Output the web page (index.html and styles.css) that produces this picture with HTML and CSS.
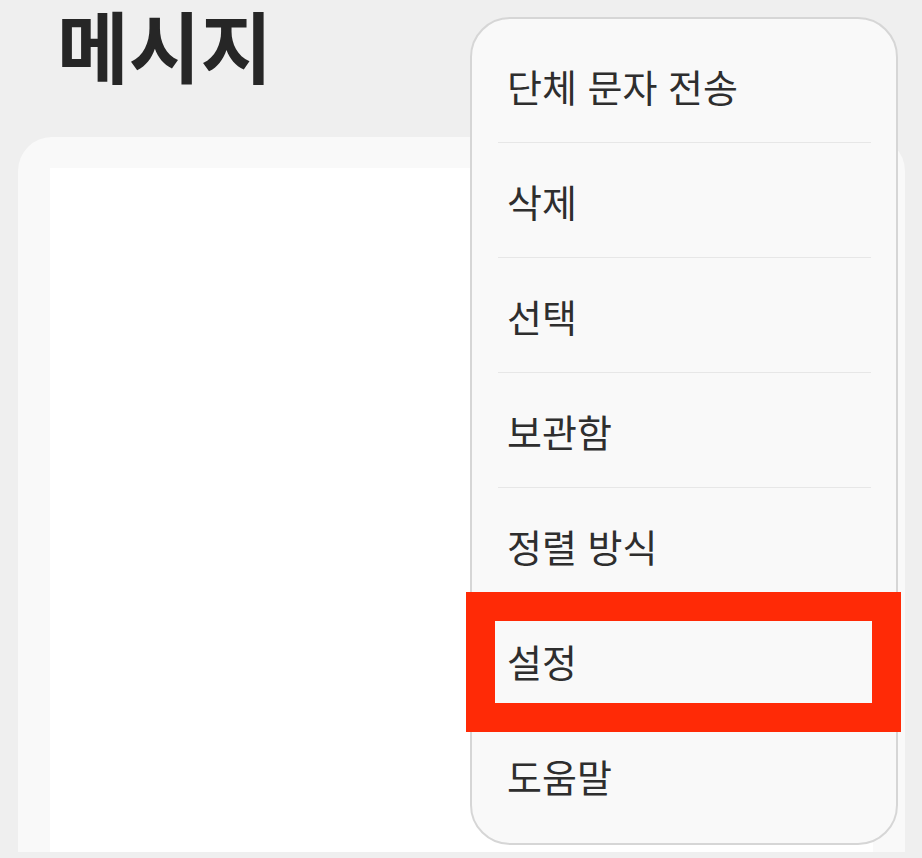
FILE: index.html
```html
<!DOCTYPE html>
<html lang="ko">
  <head>
    <meta charset="UTF-8" />
    <meta name="viewport" content="width=device-width, initial-scale=1.0" />
    <title>메시지</title>
    <link rel="stylesheet" href="styles.css">
  </head>
  <body>
    <div class="screen">
      <div class="header">
        <h1 class="title">메시지</h1>
      </div>
      <div class="card">
        <div class="list"></div>
      </div>

      <div class="menu">
        <div class="menu-item">단체 문자 전송</div>
        <div class="menu-item">삭제</div>
        <div class="menu-item">선택</div>
        <div class="menu-item">보관함</div>
        <div class="menu-item">정렬 방식</div>
        <div class="menu-item">설정</div>
        <div class="menu-item last">도움말</div>
        <div class="highlight"></div>
      </div>
    </div>
  </body>
</html>
```

FILE: styles.css
```css
* {
  margin: 0;
  padding: 0;
  box-sizing: border-box;
}
body {
  background: #efefef;
  font-family: "Noto Sans CJK KR", "Noto Sans", sans-serif;
  color: #2e2e2e;
}
.screen {
  position: relative;
  width: 922px;
  height: 858px;
  display: flex;
  flex-direction: column;
  overflow: hidden;
}
.header {
  height: 137px;
  padding-left: 57px;
}
.title {
  font-size: 78px;
  font-weight: 700;
  line-height: 1.15;
  color: #262626;
}
.card {
  flex-grow: 1;
  margin: 0 17px 6px 18px;
  padding: 31px 32px 0 32px;
  background: #f9f9f9;
  border-radius: 34px 34px 0 0;
  display: flex;
}
.list {
  flex-grow: 1;
  background: #fff;
}
.menu {
  position: absolute;
  left: 470px;
  top: 17px;
  width: 428px;
  height: 828px;
  padding-top: 9px;
  background: #f9f9f9;
  border: 2px solid #d6d6d6;
  border-radius: 40px;
}
.menu-item {
  position: relative;
  height: 115px;
  display: flex;
  align-items: center;
  padding-left: 35px;
  font-size: 38px;
  color: #2e2e2e;
}
.menu-item::after {
  content: "";
  position: absolute;
  left: 26px;
  right: 25px;
  bottom: 0;
  border-bottom: 1px solid #e7e7e7;
}
.menu-item.last::after {
  display: none;
}
.highlight {
  position: absolute;
  left: -6px;
  top: 573px;
  width: 435px;
  height: 140px;
  border: 29px solid #ff2a06;
}
```
